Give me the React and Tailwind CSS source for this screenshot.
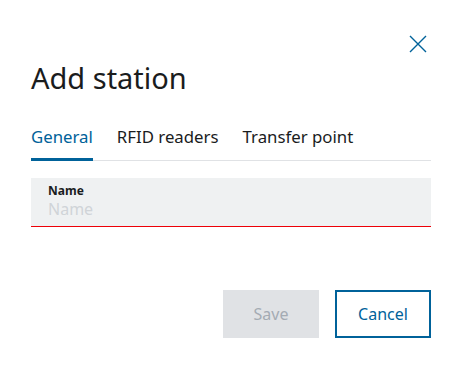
import React from 'react';

const tabs = ['General', 'RFID readers', 'Transfer point'];

const App = () => {
  return (
    <div className="w-[462px] h-[368px] bg-white px-[31px] font-['Noto_Sans',sans-serif] text-[#1a1c1d]">
      {/* Close */}
      <div className="flex justify-end pt-[35px] pr-[4px]">
        <button className="w-[18px] h-[18px] text-[#00629a]">
          <svg viewBox="0 0 18 18" width="18" height="18" fill="none" stroke="currentColor" strokeWidth="1.4">
            <path d="M1 1 L17 17 M17 1 L1 17" />
          </svg>
        </button>
      </div>

      {/* Title */}
      <h2 className="mt-[6px] text-[29px] leading-[38px] font-normal">Add station</h2>

      {/* Tabs */}
      <div className="mt-[30px] flex gap-[24px] border-b border-[#e0e2e5]">
        {tabs.map((tab, idx) => (
          <div
            key={tab}
            className={`-mb-px pb-[11px] text-[16.8px] leading-[20px] border-b-[3px] ${
              idx === 0 ? 'text-[#00629a] border-[#00629a]' : 'border-transparent'
            }`}
          >
            {tab}
          </div>
        ))}
      </div>

      {/* Name field */}
      <div className="mt-[17px] h-[49px] bg-[#eff1f2] border-b border-[#ed0007] px-[17px] pt-[5px]">
        <div className="text-[12px] leading-[16px] font-bold">Name</div>
        <div className="text-[16px] leading-[20px] text-[#d0d4d8]">Name</div>
      </div>

      {/* Actions */}
      <div className="mt-[63px] flex justify-end gap-[16px]">
        <button className="w-[96px] h-[48px] bg-[#e0e2e5] text-[#a4abb3] text-[16px]">Save</button>
        <button className="w-[96px] h-[48px] border-2 border-[#00629a] text-[#00629a] text-[16px]">Cancel</button>
      </div>
    </div>
  );
};

export default App;
